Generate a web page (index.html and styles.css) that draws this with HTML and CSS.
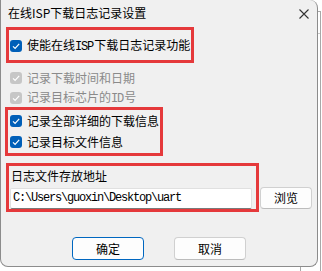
FILE: index.html
```html
<!DOCTYPE html>
<html lang="zh-CN">
<head>
<meta charset="utf-8">
<title>在线ISP下载日志记录设置</title>
<link rel="stylesheet" href="styles.css">
</head>
<body>
<div class="backwin"></div>
<div class="dialog">
  <div class="titlebar">
    <span class="title">在线ISP下载日志记录设置</span>
    <span class="close"><svg width="10" height="10" viewBox="0 0 10 10"><path d="M0.5 0.5 L9.5 9.5 M9.5 0.5 L0.5 9.5" stroke="#333" stroke-width="1.1" fill="none"/></svg></span>
  </div>
  <div class="content">
    <div class="redbox box1">
      <div class="row row-main"><span class="cb on"><svg width="12" height="12" viewBox="0 0 12 12"><path d="M3 6.3 L5.1 8.4 L9.2 3.9" stroke="#fff" stroke-width="1.2" fill="none"/></svg></span><span class="txt">使能在线<span class="lat">ISP</span>下载日志记录功能</span></div>
    </div>
    <div class="row dis r2"><span class="cb off"><svg width="12" height="12" viewBox="0 0 12 12"><path d="M3 6.3 L5.1 8.4 L9.2 3.9" stroke="#fff" stroke-width="1.2" fill="none"/></svg></span><span class="txt">记录下载时间和日期</span></div>
    <div class="row dis r3"><span class="cb off"><svg width="12" height="12" viewBox="0 0 12 12"><path d="M3 6.3 L5.1 8.4 L9.2 3.9" stroke="#fff" stroke-width="1.2" fill="none"/></svg></span><span class="txt">记录目标芯片的<span class="lat">ID</span>号</span></div>
    <div class="redbox box2">
      <div class="row"><span class="cb on"><svg width="12" height="12" viewBox="0 0 12 12"><path d="M3 6.3 L5.1 8.4 L9.2 3.9" stroke="#fff" stroke-width="1.2" fill="none"/></svg></span><span class="txt">记录全部详细的下载信息</span></div>
      <div class="row"><span class="cb on"><svg width="12" height="12" viewBox="0 0 12 12"><path d="M3 6.3 L5.1 8.4 L9.2 3.9" stroke="#fff" stroke-width="1.2" fill="none"/></svg></span><span class="txt">记录目标文件信息</span></div>
    </div>
    <div class="pathsec">
      <div class="redbox box3">
        <div class="lbl">日志文件存放地址</div>
        <div class="input">C:\Users\guoxin\Desktop\uart</div>
      </div>
      <button class="btn browse">浏览</button>
    </div>
    <div class="actions">
      <button class="btn ok">确定</button>
      <button class="btn">取消</button>
    </div>
  </div>
</div>
</body>
</html>
```
FILE: styles.css
```css
* { box-sizing: border-box; }
html, body { margin: 0; padding: 0; }
body {
  width: 322px;
  height: 271px;
  overflow: hidden;
  background: #ffffff;
  font-family: "Noto Sans CJK SC", sans-serif;
  font-size: 12px;
  color: #000;
  position: relative;
}
.backwin {
  position: absolute;
  left: 300px;
  top: 11px;
  width: 21px;
  height: 260px;
  border: 1px solid #a8a8a8;
  border-bottom: none;
  background: #fff;
}
.backwin::after {
  content: "";
  position: absolute;
  left: 0;
  right: 0;
  top: 21px;
  border-top: 1px solid #c8c8c8;
}
.dialog {
  position: relative;
  width: 318px;
  height: 267px;
  background: #f0f0f0;
  border: 1px solid #8c8c8c;
  border-top: none;
  border-radius: 0 8px 8px 8px;
  display: flex;
  flex-direction: column;
  overflow: hidden;
}
.titlebar {
  height: 27px;
  display: flex;
  align-items: center;
  justify-content: space-between;
  padding: 0 8px 1px 7px;
}
.title { font-size: 12px; line-height: 16px; }
.close { width: 10px; height: 10px; display: flex; margin-top: 1px; }
.content {
  padding-left: 5px;
  display: flex;
  flex-direction: column;
}
.redbox { border: 3px solid #e5393b; }
.box1 { width: 188px; height: 36px; display: flex; align-items: center; }
.row {
  display: flex;
  align-items: center;
  height: 21px;
  padding-left: 1px;
  white-space: nowrap;
  line-height: 14px;
}
.row-main { height: 30px; padding-top: 1px; }
.cb {
  width: 12px;
  height: 12px;
  border-radius: 3px;
  display: flex;
  flex: none;
  margin-right: 5px;
}
.cb.on { background: #005fb8; }
.cb.off { background: #c6c6c6; }
.dis { color: #8a8a8a; }
.r2 { margin-top: 4px; margin-left: 3px; }
.r3 { height: 19px; margin-left: 3px; }
.lat {
  font-family: "Liberation Mono", monospace;
  letter-spacing: -1.2px;
  margin-right: 1.2px;
}
.box2 {
  width: 158px;
  margin-left: -1px;
  padding-bottom: 1px;
}
.box2 .row { padding-left: 2px; }
.pathsec {
  margin-top: 7px;
  display: flex;
  align-items: flex-end;
}
.box3 {
  width: 253px;
  height: 49px;
  padding: 0 4px 0 1px;
  display: flex;
  flex-direction: column;
}
.lbl { height: 22px; line-height: 14px; padding: 3px 0 0 1px; }
.input {
  height: 21px;
  background: #fff;
  border: 1px solid #e0e0e0;
  border-bottom: 1px solid #7a7a7a;
  border-radius: 2px;
  font-family: "Liberation Mono", monospace;
  font-size: 12px;
  letter-spacing: -1.2px;
  line-height: 18px;
  padding-left: 2px;
  white-space: nowrap;
}
.btn {
  font-family: "Noto Sans CJK SC", sans-serif;
  font-size: 12px;
  background: #fdfdfd;
  border: 1px solid #d0d0d0;
  border-bottom-color: #bcbcbc;
  border-radius: 4px;
  color: #000;
  padding: 0;
  line-height: 14px;
}
.browse {
  width: 52px;
  height: 22px;
  margin-left: 1px;
  margin-bottom: 3px;
}
.actions {
  margin-top: 25px;
  display: flex;
  gap: 30px;
  padding-left: 66px;
}
.actions .btn { width: 72px; height: 23px; }
.ok { border: 1px solid #0067c0; }
```
